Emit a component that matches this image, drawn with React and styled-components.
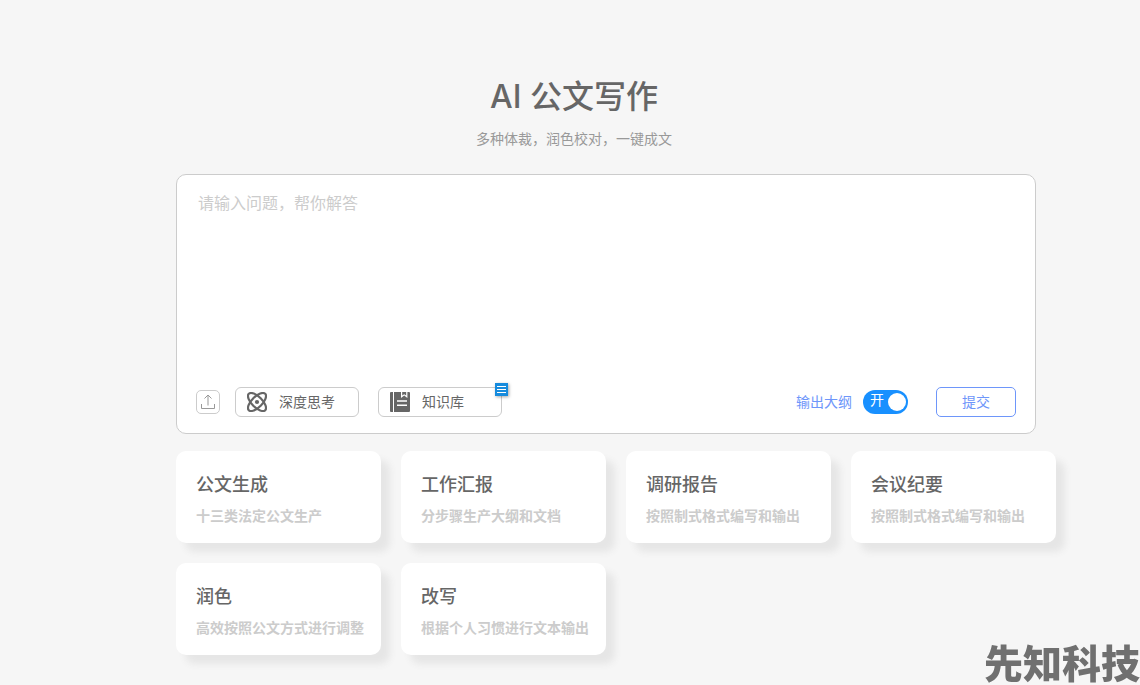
import React, { useState } from "react";
import styled, { createGlobalStyle } from "styled-components";

const templates = [
  { title: "公文生成", desc: "十三类法定公文生产" },
  { title: "工作汇报", desc: "分步骤生产大纲和文档" },
  { title: "调研报告", desc: "按照制式格式编写和输出" },
  { title: "会议纪要", desc: "按照制式格式编写和输出" },
  { title: "润色", desc: "高效按照公文方式进行调整" },
  { title: "改写", desc: "根据个人习惯进行文本输出" },
];

function UploadIcon() {
  return (
    <svg width="14" height="16" viewBox="0 0 14 16" fill="none" stroke="#999">
      <path d="M7 11.5V1M3.5 4.5L7 1l3.5 3.5M0.5 10v4.5h13V10" />
    </svg>
  );
}

function ThinkIcon() {
  return (
    <svg width="20" height="20" viewBox="2 2 20 20" fill="none" stroke="#666" strokeWidth="2.2">
      <path d="M20.2 20.2c2.04-2.03.02-7.36-4.5-11.9-4.54-4.52-9.87-6.54-11.9-4.5-2.04 2.03-.02 7.36 4.5 11.9 4.54 4.52 9.87 6.54 11.9 4.5Z" />
      <path d="M15.7 15.7c4.52-4.54 6.54-9.87 4.5-11.9-2.03-2.04-7.36-.02-11.9 4.5-4.52 4.54-6.54 9.87-4.5 11.9 2.03 2.04 7.36.02 11.9-4.5Z" />
      <circle cx="12" cy="12" r="2.1" fill="#666" stroke="none" />
    </svg>
  );
}

function BookIcon() {
  return (
    <svg width="20" height="20" viewBox="0 0 20 20" fill="#666">
      <path d="M0 1a1 1 0 0 1 1-1h2v20H1a1 1 0 0 1-1-1z" />
      <path d="M4 0h7v6l3.2-2.4L17.4 6V0H19a1 1 0 0 1 1 1v18a1 1 0 0 1-1 1H4z" />
      <path d="M12.2 0h4v3.6l-2-1.4-2 1.4z" />
      <path d="M7 9h10M7 13.3h10" stroke="#fff" strokeWidth="1.5" />
    </svg>
  );
}

function App() {
  const [text, setText] = useState("");
  const [outline, setOutline] = useState(true);

  return (
    <Page>
      <GlobalStyle />
      <Header>
        <Title>AI 公文写作</Title>
        <Subtitle>多种体裁，润色校对，一键成文</Subtitle>
      </Header>
      <Content>
        <Composer onSubmit={(e) => e.preventDefault()}>
          <Prompt
            aria-label="问题"
            placeholder="请输入问题，帮你解答"
            value={text}
            onChange={(e) => setText(e.target.value)}
          />
          <Toolbar>
            <UploadButton type="button" aria-label="上传">
              <UploadIcon />
            </UploadButton>
            <Tools>
              <ToolButton type="button">
                <ThinkIcon />
                深度思考
              </ToolButton>
              <ToolButton type="button">
                <BookIcon />
                知识库
                <Badge>
                  <svg width="9" height="9" viewBox="0 0 9 9" stroke="#fff">
                    <path d="M0 1.5h9M0 4.5h9M0 7.5h9" />
                  </svg>
                </Badge>
              </ToolButton>
            </Tools>
            <OutlineLabel htmlFor="outline">输出大纲</OutlineLabel>
            <Switch $on={outline}>
              <input
                id="outline"
                type="checkbox"
                role="switch"
                checked={outline}
                onChange={(e) => setOutline(e.target.checked)}
              />
              <span>{outline ? "开" : "关"}</span>
            </Switch>
            <SubmitButton type="submit">提交</SubmitButton>
          </Toolbar>
        </Composer>
        <Cards>
          {templates.map((item) => (
            <Card key={item.title} type="button">
              <CardTitle>{item.title}</CardTitle>
              <CardDesc>{item.desc}</CardDesc>
            </Card>
          ))}
        </Cards>
      </Content>
      <Watermark>先知科技</Watermark>
    </Page>
  );
}

export default App;

const GlobalStyle = createGlobalStyle`
  * {
    box-sizing: border-box;
  }

  body {
    margin: 0;
    background: #f6f6f6;
    overflow-x: hidden;
  }

  body, button, input, textarea {
    font-family: "Liberation Sans", "Noto Sans CJK SC", sans-serif;
  }
`;

const Page = styled.div`
  color: #666;
  font-size: 14px;
  line-height: 20px;
`;

const Header = styled.header`
  padding: 75px 0 25px 8px;
  text-align: center;
`;

const Title = styled.h1`
  margin: 0;
  font-family: Inter, "Noto Sans CJK SC", sans-serif;
  font-size: 32px;
  font-weight: 500;
  line-height: 44px;
`;

const Subtitle = styled.p`
  margin: 10px 0 0;
  color: #999;
`;

const Content = styled.main`
  padding: 0 84px 24px 176px;
`;

const Composer = styled.form`
  display: flex;
  flex-direction: column;
  margin-right: 20px;
  padding: 16px 19px;
  background: #fff;
  border: 1px solid #ccc;
  border-radius: 10px;
`;

const Prompt = styled.textarea`
  height: 196px;
  padding: 1px 2px;
  border: 0;
  outline: 0;
  resize: none;
  background: transparent;
  color: #666;
  font-size: 16px;
  line-height: 24px;

  &::placeholder {
    color: #ccc;
  }
`;

const Toolbar = styled.div`
  display: flex;
  align-items: center;
`;

const UploadButton = styled.button`
  display: flex;
  align-items: center;
  justify-content: center;
  width: 24px;
  height: 24px;
  margin-right: 15px;
  padding: 0;
  background: #fff;
  border: 1px solid #ccc;
  border-radius: 5px;
`;

const Tools = styled.div`
  display: flex;
  flex: 1;
  gap: 19px;
`;

const ToolButton = styled.button`
  position: relative;
  display: flex;
  align-items: center;
  gap: 12px;
  width: 124px;
  height: 30px;
  padding: 0 11px;
  background: #fff;
  border: 1px solid #ccc;
  border-radius: 6px;
  color: #666;
  font-size: 14px;
  line-height: 20px;
`;

const Badge = styled.span`
  position: absolute;
  top: -5px;
  right: -7px;
  display: flex;
  align-items: center;
  justify-content: center;
  width: 13px;
  height: 13px;
  background: #168bdd;
  box-shadow: 1px 1px 3px rgba(0, 0, 0, 0.35);
`;

const OutlineLabel = styled.label`
  margin-right: 11px;
  color: #6e96fa;
`;

const Switch = styled.span`
  position: relative;
  display: flex;
  margin-right: 28px;

  input {
    appearance: none;
    display: flex;
    align-items: center;
    justify-content: ${({ $on }) => ($on ? "flex-end" : "flex-start")};
    width: 45px;
    height: 24px;
    margin: 0;
    padding: 0 2px;
    border-radius: 12px;
    background: ${({ $on }) => ($on ? "#1890ff" : "#ccc")};
  }

  input::before {
    content: "";
    width: 18px;
    height: 18px;
    border-radius: 50%;
    background: #fff;
  }

  span {
    position: absolute;
    top: 0;
    left: ${({ $on }) => ($on ? "7px" : "24px")};
    color: #fff;
    pointer-events: none;
  }
`;

const SubmitButton = styled.button`
  width: 80px;
  height: 30px;
  padding: 0;
  background: #fff;
  border: 1px solid #6e96fa;
  border-radius: 5px;
  color: #6e96fa;
  font-size: 14px;
  line-height: 20px;
`;

const Cards = styled.section`
  display: grid;
  grid-template-columns: repeat(auto-fill, minmax(205px, 1fr));
  gap: 20px;
  margin-top: 17px;
`;

const Card = styled.button`
  display: flex;
  flex-direction: column;
  gap: 10px;
  padding: 22px 20px 18px;
  border: 0;
  border-radius: 10px;
  background: #fff;
  box-shadow: 9px 9px 7px #e6e6e6;
  text-align: left;
  white-space: nowrap;
`;

const CardTitle = styled.span`
  color: #666;
  font-size: 18px;
  font-weight: 500;
  line-height: 24px;
`;

const CardDesc = styled.span`
  color: #ccc;
  font-size: 14px;
  font-weight: 700;
  line-height: 18px;
`;

const Watermark = styled.div`
  position: fixed;
  right: 0;
  bottom: 0;
  color: #707070;
  font-size: 39px;
  font-weight: 900;
  line-height: 40px;
  white-space: nowrap;
  pointer-events: none;
`;
